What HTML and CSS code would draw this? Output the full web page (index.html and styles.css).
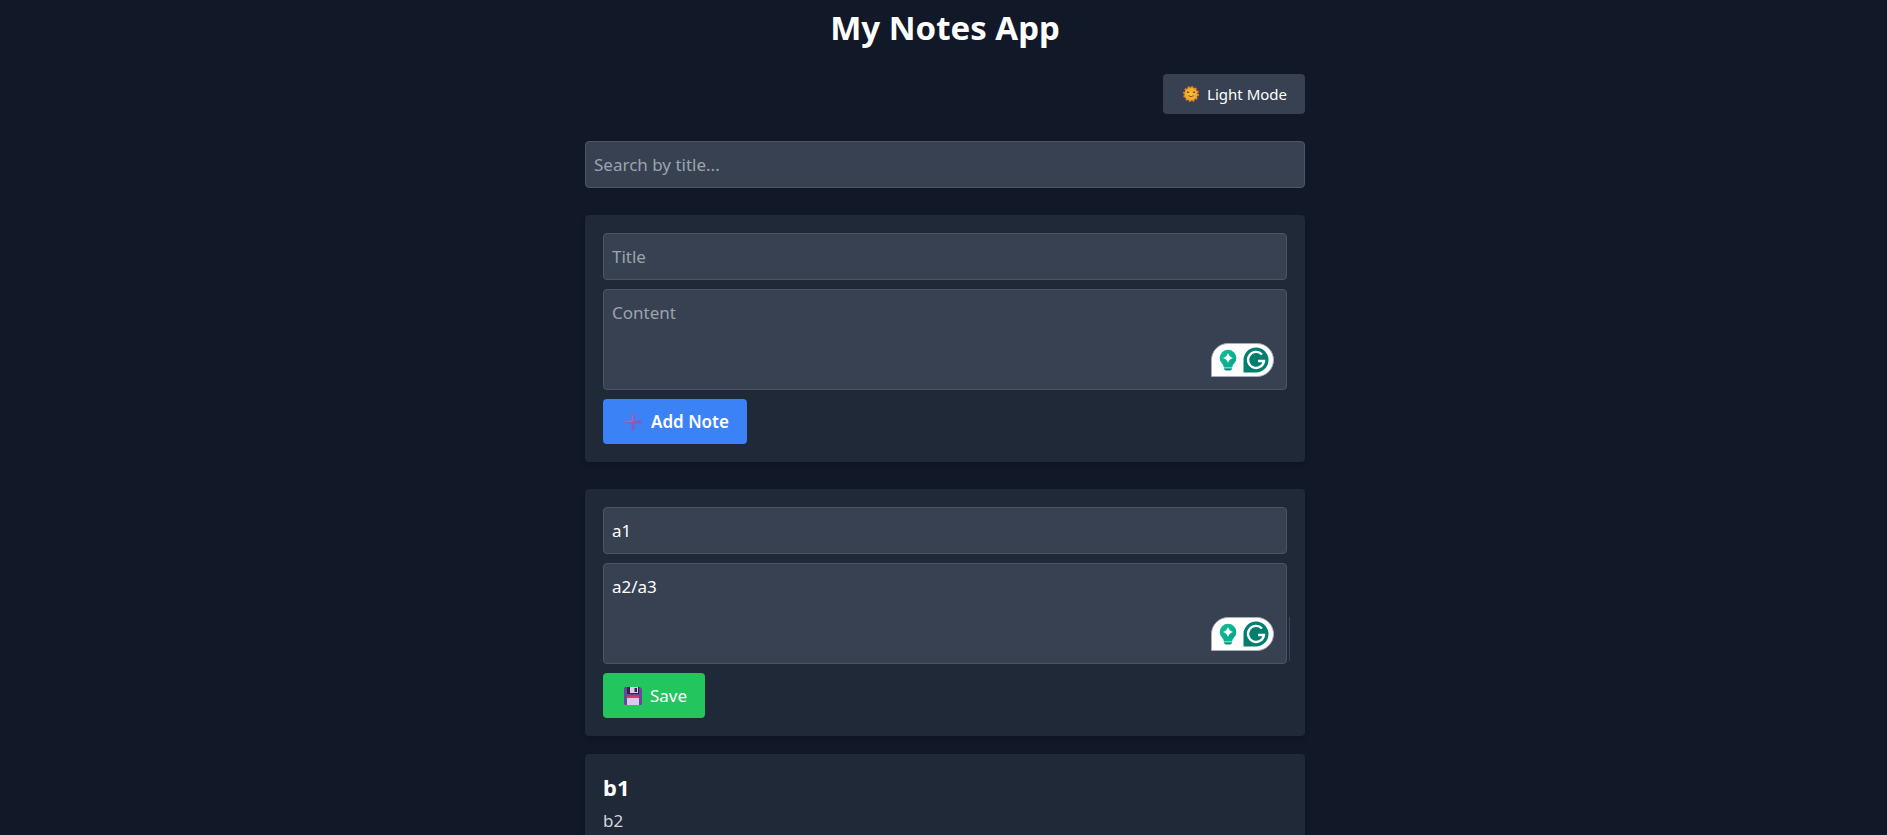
FILE: index.html
```html
<!DOCTYPE html>
<html lang="en">
<head>
<meta charset="utf-8">
<meta name="viewport" content="width=device-width, initial-scale=1">
<title>My Notes App</title>
<link rel="stylesheet" href="styles.css">
</head>
<body>
<svg width="0" height="0" class="defs" aria-hidden="true">
  <defs>
    <linearGradient id="bulb-fill" x1="0" y1="0" x2="1" y2="1"><stop offset="0" stop-color="#15c39a"/><stop offset="1" stop-color="#02a08a"/></linearGradient>
    <linearGradient id="plus-fill" x1="0" y1="0" x2="1" y2="1"><stop offset="0" stop-color="#9067b5"/><stop offset="1" stop-color="#7f50c8"/></linearGradient>
    <radialGradient id="sun-fill"><stop offset="0" stop-color="#fbc52f"/><stop offset="1" stop-color="#f0a12c"/></radialGradient>
    <symbol id="assistant" viewBox="0 0 63 34">
      <path d="M.5 33.500V17A16.500 16.500 0 0 1 17 .5H46A16.500 16.500 0 0 1 46 33.500Z" fill="#fff" stroke="#a9adbb"/>
      <circle cx="17" cy="15" r="8.300" fill="url(#bulb-fill)"/>
      <path d="M11.500 20h11l-1.500 4.800h-8z" fill="#08b092"/>
      <path d="M17 10q1.200 3.800 5 5-3.800 1.200-5 5-1.200-3.800-5-5 3.800-1.200 5-5z" fill="#fff"/>
      <path d="M12.500 24.800h9q.2 2.700-2.500 2.700h-4q-2.700 0-2.500-2.700z" fill="#fff"/>
      <path d="M13 25.300h8q0 2.200-2.200 2.200h-3.600q-2.200 0-2.200-2.200z" fill="#02917c"/>
      <path d="M32.500 29.500V17A12.500 12.500 0 1 1 45 29.500Z" fill="#027e6f"/>
      <path d="M51 11.500A8 8 0 1 0 53 18H47" fill="none" stroke="#fff" stroke-width="2.400"/>
    </symbol>
  </defs>
</svg>
<main class="app">
  <h1 class="app-title">My Notes App</h1>
  <div class="toolbar">
    <button type="button" class="button button-theme">
      <svg class="icon-sun" viewBox="0 0 18 18" aria-hidden="true">
        <circle cx="9" cy="9" r="8" fill="none" stroke="#e9772c" stroke-width="2" stroke-dasharray="2.400 1.790"/>
        <circle cx="9" cy="9" r="7.500" fill="url(#sun-fill)"/>
        <path d="M4.500 7.500l2.500-.7M4.800 6.200l2 1.500M13.500 7.500l-2.500-.7M13.200 6.200l-2 1.500M6 10.800q3 2.500 6 0" fill="none" stroke="#7b4526"/>
      </svg>
      <span>Light Mode</span>
    </button>
  </div>
  <input type="search" class="field search" placeholder="Search by title..." aria-label="Search by title">
  <form class="card form-card">
    <input type="text" class="field" placeholder="Title" aria-label="Title">
    <div class="editor">
      <textarea class="field" rows="3" placeholder="Content" aria-label="Content"></textarea>
      <svg class="assistant" aria-hidden="true"><use href="#assistant"/></svg>
    </div>
    <button type="button" class="button button-add">
      <svg class="icon" viewBox="0 0 18 18" aria-hidden="true"><path d="M7.500 1.200Q9 -.8 10.500 1.200V7.500H16.800Q18.800 9 16.800 10.500H10.500V16.800Q9 18.800 7.500 16.800V10.500H1.200Q-.8 9 1.200 7.500H7.500Z" fill="url(#plus-fill)"/><path d="M8.300 1.500V8.300H1.500" fill="none" stroke="#a07dbb" stroke-width=".8"/></svg>
      <span>Add Note</span>
    </button>
  </form>
  <section class="notes">
    <form class="card form-card">
      <input type="text" class="field" value="a1" aria-label="Note title">
      <div class="editor editor-active">
        <textarea class="field" rows="3" aria-label="Note content">a2/a3</textarea>
        <svg class="assistant" aria-hidden="true"><use href="#assistant"/></svg>
      </div>
      <button type="button" class="button button-save">
        <svg class="icon" viewBox="0 0 18 18" aria-hidden="true">
          <path d="M1 0H16L18 2V17L17 18H1L0 17V1Z" fill="#67469b"/>
          <path d="M3 0H15V7H3Z" fill="#35234f"/>
          <path d="M6 0H14V6H6Z" fill="#d8cee4"/>
          <path d="M10.500 1H13V5H10.500Z" fill="#35234f"/>
          <path d="M3 9H15V18H3Z" fill="#dcc8e8"/>
          <path d="M3 8.500H15V11H3Z" fill="#de3566"/>
        </svg>
        <span>Save</span>
      </button>
    </form>
    <article class="card">
      <h2 class="note-title">b1</h2>
      <p class="note-text">b2</p>
    </article>
  </section>
</main>
</body>
</html>
```
FILE: styles.css
```css
* { box-sizing: border-box; }

body {
  margin: 0;
  padding-left: 3px;
  background: #111827;
  color: #fff;
  font: 17px/27px "Noto Sans", "Open Sans", sans-serif;
}

.defs { position: absolute; }

.app {
  max-width: 720px;
  margin: 0 auto;
  padding-bottom: 27px;
}

.app-title {
  margin: 0;
  padding: 8px 0 26px;
  font-size: 33px;
  line-height: 40px;
  font-weight: 700;
  text-align: center;
}

.toolbar {
  display: flex;
  justify-content: flex-end;
  margin-bottom: 27px;
}

.button {
  display: inline-flex;
  align-items: center;
  gap: 8px;
  border: 0;
  border-radius: 4px;
  padding: 9px 18px;
  color: #fff;
  font: inherit;
  cursor: pointer;
}

.button-theme {
  padding: 8px 18px 8px 20px;
  background: #374151;
  font-size: 15px;
  line-height: 24px;
}

.button-add {
  gap: 9px;
  padding-left: 21px;
  background: #3b82f6;
  font-weight: 600;
}

.button-save {
  padding-left: 21px;
  background: #22c55e;
}

.icon { width: 18px; height: 18px; }
.icon-sun { width: 16px; height: 16px; }

.field {
  display: block;
  width: 100%;
  margin: 0;
  padding: 9px 8px;
  border: 1px solid #4b5563;
  border-radius: 4px;
  outline: 0;
  appearance: none;
  background: #374151;
  color: #fff;
  font: inherit;
  resize: none;
}

.field::placeholder { color: #9ca3af; opacity: 1; }

.search { margin-bottom: 27px; }

.card {
  padding: 18px;
  border-radius: 4px;
  background: #1f2937;
  box-shadow: 0 4px 6px -1px rgb(0 0 0 / 10%), 0 2px 4px -2px rgb(0 0 0 / 10%);
}

.form-card {
  display: flex;
  flex-direction: column;
  align-items: flex-start;
  gap: 9px;
}

.editor {
  position: relative;
  width: 100%;
}

.editor-active::after {
  content: "";
  position: absolute;
  top: 54px;
  right: -3px;
  width: 1px;
  height: 44px;
  background: #374562;
}

.assistant {
  position: absolute;
  right: 13px;
  bottom: 13px;
  width: 63px;
  height: 34px;
}

.notes {
  display: flex;
  flex-direction: column;
  gap: 18px;
  margin-top: 27px;
}

.note-title {
  margin: 0;
  font-size: 22px;
  line-height: 30px;
  font-weight: 700;
}

.note-text {
  margin: 0;
  padding-top: 5px;
  color: #d1d5db;
}
```
